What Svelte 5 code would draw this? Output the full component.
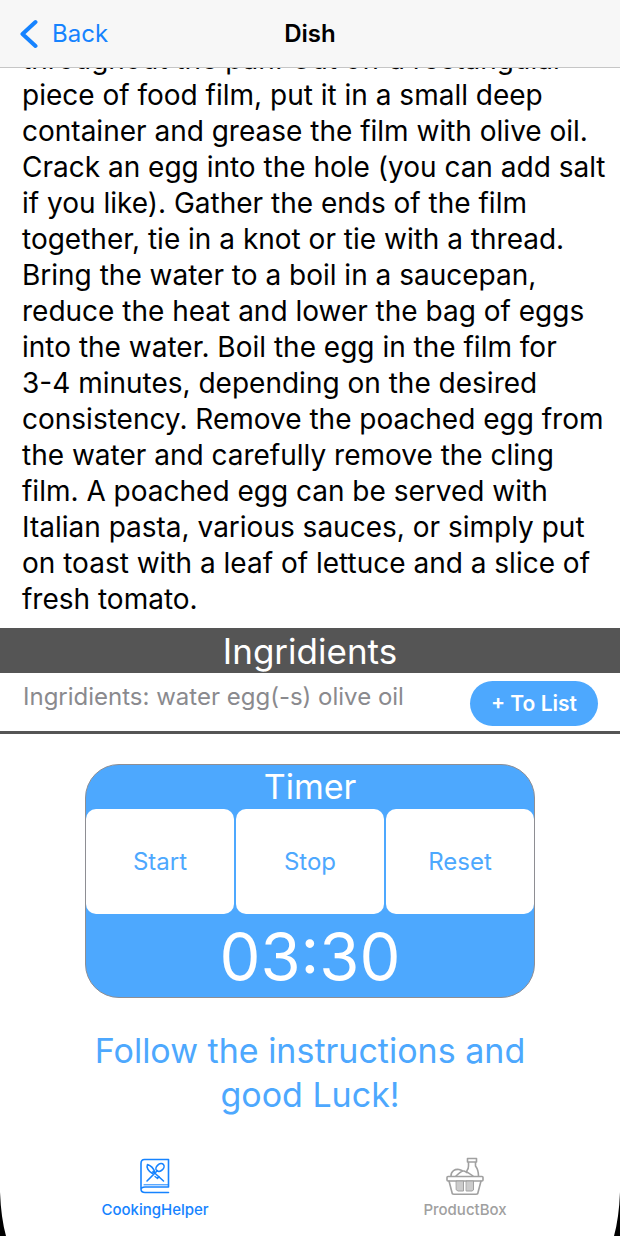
<script>
  const initial = 210;
  let seconds = $state(initial);
  let timer = null;

  const steps = [
    'throughout the pan. Cut off a rectangular',
    'piece of food film, put it in a small deep',
    'container and grease the film with olive oil.',
    'Crack an egg into the hole (you can add salt',
    'if you like). Gather the ends of the film',
    'together, tie in a knot or tie with a thread.',
    'Bring the water to a boil in a saucepan,',
    'reduce the heat and lower the bag of eggs',
    'into the water. Boil the egg in the film for',
    '3-4 minutes, depending on the desired',
    'consistency. Remove the poached egg from',
    'the water and carefully remove the cling',
    'film. A poached egg can be served with',
    'Italian pasta, various sauces, or simply put',
    'on toast with a leaf of lettuce and a slice of',
    'fresh tomato.'
  ];

  const pad = (n) => String(n).padStart(2, '0');
  const clock = $derived(pad(Math.floor(seconds / 60)) + ':' + pad(seconds % 60));

  function stop() {
    clearInterval(timer);
    timer = null;
  }
  function start() {
    if (timer) return;
    timer = setInterval(() => {
      if (seconds > 0) seconds -= 1;
      else stop();
    }, 1000);
  }
  function reset() {
    stop();
    seconds = initial;
  }
</script>

<div class="screen">
  <header>
    <a class="back" href="#dishes">
      <svg width="18" height="30" viewBox="0 0 18 30" aria-hidden="true">
        <path d="M15.5 3 2.500 15l13 12" />
      </svg>
      <span>Back</span>
    </a>
    <h1>Dish</h1>
  </header>

  <main>
    <p class="recipe">
      {#each steps as line}{line}<br />{/each}
    </p>

    <h2 class="band">Ingridients</h2>
    <div class="ingredients">
      <p>Ingridients: water egg(-s) olive oil</p>
      <button class="add">+ To List</button>
    </div>

    <section class="timer">
      <h2>Timer</h2>
      <div class="controls">
        <button onclick={start}>Start</button>
        <button onclick={stop}>Stop</button>
        <button onclick={reset}>Reset</button>
      </div>
      <div class="clock">{clock}</div>
    </section>

    <p class="luck">Follow the instructions and<br />good Luck!</p>
  </main>

  <nav>
    <a class="active" href="#cooking">
      <svg width="40" height="40" viewBox="0 0 40 40" aria-hidden="true">
        <path d="M33.500 3.500H9.500Q6 3.500 6 7.500v25.500q0 3.500 4 3.500h23.500M33.500 3.500v27.500H10q-4 0-4 3" stroke-width="1.600" />
        <path d="M9 28.800h24" stroke-width="1" />
        <path d="M12 25 22.500 14.500M28.500 25 18 15.500" stroke-width="1.600" />
        <ellipse cx="25" cy="11.500" rx="4.600" ry="3.300" transform="rotate(-42 25 11.500)" stroke-width="1.600" />
        <path d="M12.500 8.500c-1.500 3 1 7 5 9l2-2c-1-3-4-6-7-7Z" stroke-width="1.600" />
        <path d="m20 20.500 2.500 2 1.500-2" stroke-width="1.300" />
      </svg>
      <span>CookingHelper</span>
    </a>
    <a href="#products">
      <svg width="40" height="40" viewBox="0 0 40 40" aria-hidden="true">
        <g stroke-width="1.600">
          <rect x="2" y="20.500" width="36" height="4.500" rx="1" />
          <path d="m4 25 3 11.500q0 1.700 2 1.700h22q2 0 2-1.700l3-11.500" />
          <path d="M22.500 2.500h9v3.500h-9zM23.500 6v4q0 3-1.500 4.500l-.5 2M30.500 6v4q3 4 3 10" />
          <path d="M6 20c0-5 4-7 8-6.500l3 1M11 20c3-3 6-5.500 8-5q5 1.500 9 5" />
        </g>
        <path class="shade" d="M11.500 25h7v10h-5.500l-1.500-1zM21.500 25h7v9l-1.500 1h-5.500z" stroke-width="1" />
      </svg>
      <span>ProductBox</span>
    </a>
  </nav>

  <svg class="corner left" width="8" height="44" viewBox="0 0 8 44" aria-hidden="true">
    <path d="M0 0Q1 26 6 44H0Z" />
  </svg>
  <svg class="corner right" width="8" height="44" viewBox="0 0 8 44" aria-hidden="true">
    <path d="M0 0Q1 26 6 44H0Z" />
  </svg>
</div>

<style>
  :global(body) {
    margin: 0;
    background: #fff;
  }
  .screen {
    position: relative;
    display: flex;
    flex-direction: column;
    min-height: 100vh;
    overflow: hidden;
    font-family: Inter, "Liberation Sans", sans-serif;
    color: #000;
    background: #fff;
  }
  h1,
  h2,
  p {
    margin: 0;
    font-weight: 400;
  }
  a {
    text-decoration: none;
  }
  button {
    border: 0;
    padding: 0;
    font-family: inherit;
    cursor: pointer;
  }
  svg {
    fill: none;
    stroke: currentColor;
    stroke-linecap: round;
    stroke-linejoin: round;
  }
  header {
    display: grid;
    grid-template-columns: 1fr auto 1fr;
    align-items: center;
    padding: 14px 20px 13px;
    background: #f7f7f7;
    border-bottom: 1px solid #c6c6c6;
  }
  .back {
    display: flex;
    align-items: center;
    gap: 14px;
    font-size: 24px;
    line-height: 40px;
    color: #1683ff;
  }
  .back svg {
    stroke-width: 4;
  }
  h1 {
    font-size: 24px;
    line-height: 40px;
    font-weight: 600;
  }
  main {
    display: flex;
    flex-direction: column;
    flex: 1;
    overflow: hidden;
  }
  .recipe {
    margin-top: -27px;
    padding: 0 0 11px 22px;
    font-size: 28px;
    line-height: 36px;
    white-space: nowrap;
  }
  .band {
    padding-top: 2px;
    font-size: 35px;
    line-height: 43px;
    text-align: center;
    color: #fff;
    background: #555;
  }
  .ingredients {
    display: flex;
    align-items: flex-start;
    justify-content: space-between;
    padding: 8px 22px 5px 23px;
    border-bottom: 3px solid #555;
  }
  .ingredients p {
    font-size: 24px;
    line-height: 31px;
    color: #8a8a8e;
  }
  .add {
    padding: 0 21px;
    border-radius: 23px;
    font-size: 21px;
    line-height: 45px;
    font-weight: 600;
    color: #fff;
    background: #4da8fe;
  }
  .timer {
    margin: 30px 85px 0;
    overflow: hidden;
    border: 1px solid #8e8e93;
    border-radius: 34px;
    text-align: center;
    color: #fff;
    background: #4da8fe;
  }
  .timer h2 {
    font-size: 34px;
    line-height: 44px;
  }
  .controls {
    display: grid;
    grid-template-columns: repeat(3, 1fr);
    gap: 2px;
  }
  .controls button {
    border-radius: 10px;
    font-size: 24px;
    line-height: 105px;
    color: #4da8fe;
    background: #fff;
  }
  .clock {
    padding-top: 2px;
    font-size: 65px;
    line-height: 81px;
  }
  .luck {
    margin-top: 31px;
    font-size: 34px;
    line-height: 44px;
    text-align: center;
    color: #4da8fe;
  }
  nav {
    display: grid;
    grid-template-columns: 1fr 1fr;
    padding-bottom: 16px;
  }
  nav a {
    display: flex;
    flex-direction: column;
    align-items: center;
    gap: 4px;
    font-size: 15px;
    line-height: 20px;
    font-weight: 500;
    color: #a0a0a0;
  }
  nav .active {
    color: #1683ff;
  }
  .shade {
    fill: #ccc;
  }
  .corner {
    position: absolute;
    bottom: 0;
    fill: #000;
    stroke: none;
  }
  .left {
    left: 0;
  }
  .right {
    right: 0;
    transform: scaleX(-1);
  }
</style>
